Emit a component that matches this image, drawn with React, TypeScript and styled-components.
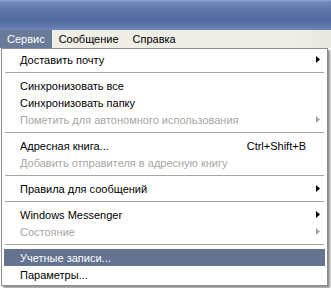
import React from 'react';
import styled, { createGlobalStyle } from 'styled-components';

const GlobalStyle = createGlobalStyle`
  html, body {
    margin: 0;
    padding: 0;
    background: #ffffff;
  }
  body {
    font-family: "Liberation Sans", Arial, sans-serif;
    font-size: 11px;
  }
`;

const Screen = styled.div`
  width: 331px;
  height: 288px;
  overflow: hidden;
  background: #ffffff;
`;

const TitleBar = styled.div`
  height: 30px;
  background: linear-gradient(
    to bottom,
    #8ba4d0 0px,
    #718bbb 2px,
    #5c76a9 10px,
    #536d9f 20px,
    #5d77aa 26px,
    #6f88b7 30px
  );
`;

const MenuBar = styled.div`
  height: 18px;
  display: flex;
  align-items: stretch;
  background: linear-gradient(to right, #eeede6 0%, #eeede6 85%, #e9e8e0 100%);
`;

const MenuBarItem = styled.div<{ $open?: boolean }>`
  display: flex;
  align-items: center;
  padding: 0 7px;
  color: ${(p) => (p.$open ? '#ffffff' : '#000000')};
  background: ${(p) => (p.$open ? '#6a7a99' : 'transparent')};
`;

const Dropdown = styled.div`
  width: 327px;
  box-sizing: border-box;
  margin-left: 1px;
  padding: 2px 2px;
  background: #ffffff;
  border: 1px solid #8c8c8c;
  box-shadow: 2px 2px 2px rgba(0, 0, 0, 0.45);
`;

const Item = styled.div<{ $disabled?: boolean; $active?: boolean }>`
  height: 17px;
  display: flex;
  align-items: center;
  padding-left: 16px;
  color: ${(p) => (p.$active ? '#ffffff' : p.$disabled ? '#a7a6a2' : '#000000')};
  background: ${(p) => (p.$active ? '#64738f' : 'transparent')};
  white-space: nowrap;
`;

const Label = styled.span`
  flex: 1;
`;

const Shortcut = styled.span`
  padding-right: 0;
`;

const ArrowCell = styled.span`
  width: 19px;
  height: 17px;
  display: flex;
  align-items: center;
  justify-content: flex-start;
  padding-left: 10px;
  box-sizing: border-box;
`;

const Separator = styled.div`
  height: 9px;
  display: flex;
  align-items: center;
  padding: 0 1px;

  &::after {
    content: '';
    flex: 1;
    height: 1px;
    background: #a5a5a5;
  }
`;

function Arrow({ color }: { color: string }) {
  return (
    <svg width="4" height="7" viewBox="0 0 4 7">
      <path d="M0 0 L4 3.5 L0 7 Z" fill={color} />
    </svg>
  );
}

type Entry =
  | { sep: true }
  | { sep?: false; label: string; disabled?: boolean; active?: boolean; sub?: boolean; shortcut?: string };

const entries: Entry[] = [
  { label: 'Доставить почту', sub: true },
  { sep: true },
  { label: 'Синхронизовать все' },
  { label: 'Синхронизовать папку' },
  { label: 'Пометить для автономного использования', disabled: true, sub: true },
  { sep: true },
  { label: 'Адресная книга...', shortcut: 'Ctrl+Shift+B' },
  { label: 'Добавить отправителя в адресную книгу', disabled: true },
  { sep: true },
  { label: 'Правила для сообщений', sub: true },
  { sep: true },
  { label: 'Windows Messenger', sub: true },
  { label: 'Состояние', disabled: true, sub: true },
  { sep: true },
  { label: 'Учетные записи...', active: true },
  { label: 'Параметры...' },
];

export default function App() {
  return (
    <Screen>
      <GlobalStyle />
      <TitleBar />
      <MenuBar>
        <MenuBarItem $open>Сервис</MenuBarItem>
        <MenuBarItem>Сообщение</MenuBarItem>
        <MenuBarItem>Справка</MenuBarItem>
      </MenuBar>
      <Dropdown>
        {entries.map((e, i) =>
          e.sep ? (
            <Separator key={i} />
          ) : (
            <Item key={i} $disabled={e.disabled} $active={e.active}>
              <Label>{e.label}</Label>
              {e.shortcut && <Shortcut>{e.shortcut}</Shortcut>}
              <ArrowCell>
                {e.sub && <Arrow color={e.disabled ? '#a7a6a2' : '#000000'} />}
              </ArrowCell>
            </Item>
          )
        )}
      </Dropdown>
    </Screen>
  );
}
